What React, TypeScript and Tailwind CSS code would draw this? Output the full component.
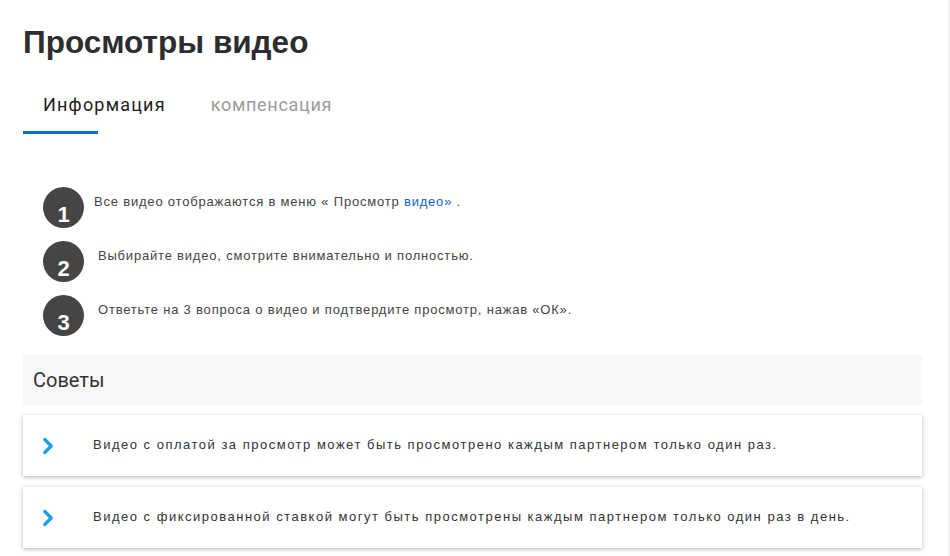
import { ChevronRight } from 'lucide-react'

const steps = [
  { n: 1, pad: 'pl-[10px]', text: <>Все видео отображаются в меню « Просмотр <span className="text-[#1a5fcc]">видео»</span> .</> },
  { n: 2, pad: 'pl-[14px]', text: <>Выбирайте видео, смотрите внимательно и полностью.</> },
  { n: 3, pad: 'pl-[14px]', text: <>Ответьте на 3 вопроса о видео и подтвердите просмотр, нажав «ОК».</> },
]

const tips = [
  'Видео с оплатой за просмотр может быть просмотрено каждым партнером только один раз.',
  'Видео с фиксированной ставкой могут быть просмотрены каждым партнером только один раз в день.',
]

export default function App() {
  return (
    <div className="min-h-[556px] w-[950px] bg-white border-r-2 border-[#f0f0f0] font-['Liberation_Sans',Arial,sans-serif]">
      <div className="w-[899px] ml-[23px] pt-[23px]">
        <h1 className="text-[31.5px] leading-[38px] font-bold text-[#2b2d2e]">
          Просмотры видео
        </h1>

        {/* tabs */}
        <div className="flex mt-[25px] text-[18px] font-['Roboto','Liberation_Sans',sans-serif]">
          <div className="relative pl-[20px] pr-[45px] h-[47px] flex items-start pt-[5px] text-[#1d1d1d] tracking-[1.2px]">
            Информация
            <div className="absolute left-0 bottom-[-1px] w-[75px] h-[3px] bg-[#0b70c3]" />
          </div>
          <div className="pt-[5px] text-[#9b9b9b] tracking-[0.7px]">компенсация</div>
        </div>

        {/* steps */}
        <div className="mt-[54px] flex flex-col gap-[13px] pl-[20px]">
          {steps.map((s) => (
            <div key={s.n} className="flex items-center h-[41px]">
              <div className="w-[41px] h-[41px] rounded-full bg-[#454545] flex justify-center items-end shrink-0">
                <span className="text-white font-bold text-[22px] leading-none mb-[2px]">{s.n}</span>
              </div>
              <div className={`${s.pad} text-[13px] text-[#444] pb-[12px] tracking-[0.8px]`}>{s.text}</div>
            </div>
          ))}
        </div>

        {/* tips */}
        <div className="mt-[19px] h-[50px] bg-[#f7f7f7] flex items-center px-[10px] text-[20px] text-[#333] font-['Roboto','Liberation_Sans',sans-serif]">
          Советы
        </div>

        <div className="mt-[10px] flex flex-col gap-[11px]">
          {tips.map((t) => (
            <div key={t} className="h-[61px] bg-white flex items-center shadow-[0_1px_4px_rgba(0,0,0,0.3)]">
              <ChevronRight className="w-[26px] h-[26px] text-[#1e9cec] ml-[12px] mr-[32px]" strokeWidth={3} />
              <span className="text-[13px] text-[#333] tracking-[1.5px] pb-[2px]">{t}</span>
            </div>
          ))}
        </div>
      </div>
    </div>
  )
}
